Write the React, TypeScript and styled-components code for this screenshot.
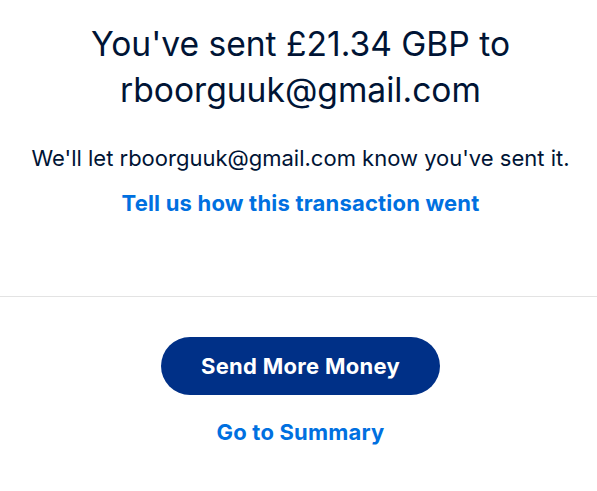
import React from "react";
import styled, { createGlobalStyle } from "styled-components";

const Global = createGlobalStyle`
  html, body { margin: 0; padding: 0; background: #ffffff; }
  body { font-family: Inter, "Noto Sans", Arial, sans-serif; -webkit-font-smoothing: antialiased; }
`;

const Page = styled.main`
  width: 597px;
  display: flex;
  flex-direction: column;
  align-items: center;
`;

const Top = styled.section`
  width: 100%;
  display: flex;
  flex-direction: column;
  align-items: center;
  padding: 21px 0 79px 4px;
  box-sizing: border-box;
`;

const Heading = styled.h1`
  margin: 0;
  font-size: 33.6px;
  line-height: 46px;
  font-weight: 400;
  color: #001435;
  text-align: center;
`;

const Body = styled.p`
  margin: 31px 0 0;
  font-size: 22px;
  line-height: 28px;
  color: #001435;
  text-align: center;
  white-space: nowrap;
`;

const TextLink = styled.a<{ $top: number }>`
  margin-top: ${(p) => p.$top}px;
  font-size: 22px;
  line-height: 28px;
  font-weight: 700;
  letter-spacing: 0.2px;
  color: #0070e0;
  text-decoration: none;
  cursor: pointer;
`;

const Divider = styled.hr`
  width: 100%;
  margin: 0;
  border: 0;
  border-top: 1px solid #e3e3e3;
`;

const Actions = styled.section`
  width: 100%;
  display: flex;
  flex-direction: column;
  align-items: center;
  padding: 40px 0 0 4px;
  box-sizing: border-box;
`;

const PrimaryButton = styled.button`
  width: 279px;
  height: 58px;
  padding: 0;
  border: 0;
  border-radius: 29px;
  background: #003087;
  color: #ffffff;
  font-family: inherit;
  font-size: 22px;
  font-weight: 700;
  letter-spacing: 0.3px;
  cursor: pointer;
`;

export default function App() {
  return (
    <>
      <Global />
      <Page>
        <Top>
          <Heading>
            You've sent £21.34 GBP to
            <br />
            rboorguuk@gmail.com
          </Heading>
          <Body>We'll let rboorguuk@gmail.com know you've sent it.</Body>
          <TextLink $top={17}>Tell us how this transaction went</TextLink>
        </Top>
        <Divider />
        <Actions>
          <PrimaryButton>Send More Money</PrimaryButton>
          <TextLink $top={23}>Go to Summary</TextLink>
        </Actions>
      </Page>
    </>
  );
}
